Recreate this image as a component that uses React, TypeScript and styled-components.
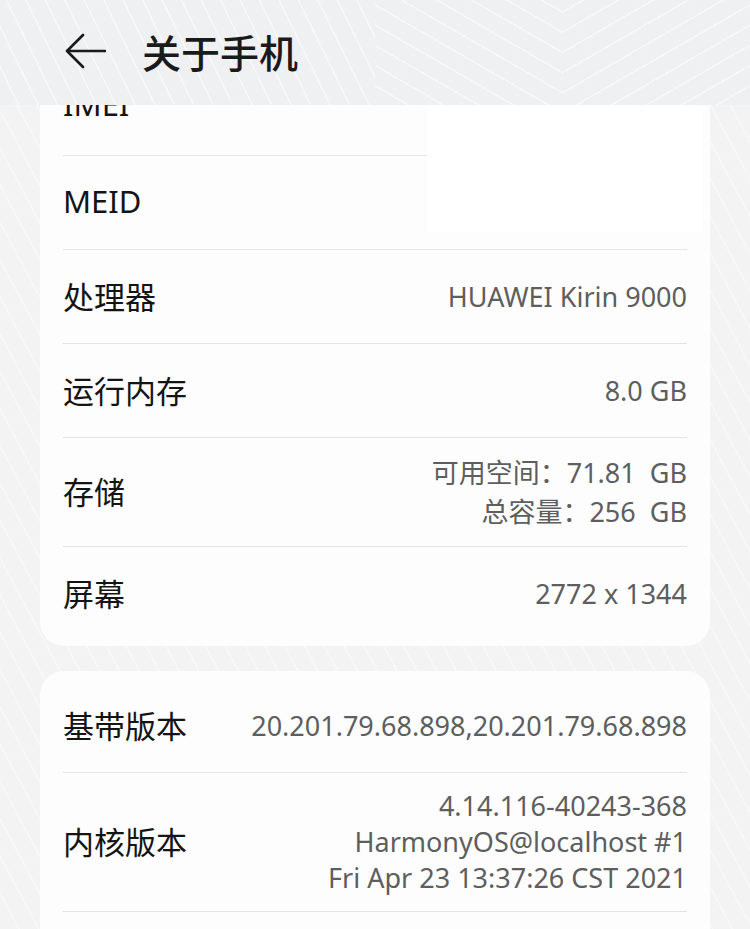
import React from "react";
import styled, { createGlobalStyle } from "styled-components";

const GlobalStyle = createGlobalStyle`
  html, body {
    margin: 0;
    padding: 0;
    background: #f3f3f4;
  }
  body {
    font-family: "Noto Sans", "Noto Sans CJK SC", sans-serif;
    -webkit-font-smoothing: antialiased;
  }
`;

const stripes = (angle: number, color: string) =>
  `repeating-linear-gradient(${angle}deg, transparent 0px, transparent 16px, ${color} 16px, ${color} 17.5px)`;

const Page = styled.div`
  width: 750px;
  height: 929px;
  overflow: hidden;
  display: flex;
  flex-direction: column;
  background-color: #f3f3f4;
  background-image: ${stripes(62, "rgba(255,255,255,0.45)")};
`;

const Header = styled.header`
  height: 105px;
  flex-shrink: 0;
  display: flex;
  align-items: center;
  gap: 34px;
  padding: 0 0 4px 64px;
  box-sizing: border-box;
  background-color: #eff0f2;
  background-image: ${stripes(-30, "rgba(255,255,255,0.5)")},
    ${stripes(30, "rgba(255,255,255,0.5)")},
    ${stripes(64, "rgba(255,255,255,0.5)")};
  background-size: 188px 100%, 187px 100%, 375px 100%;
  background-position: right top, 375px top, left top;
  background-repeat: no-repeat;
  position: relative;
  z-index: 2;
`;

const BackButton = styled.button`
  width: 44px;
  height: 40px;
  padding: 0;
  border: none;
  background: none;
  display: flex;
  align-items: center;
  justify-content: flex-start;
  color: #1a1a1a;
`;

const Title = styled.h1`
  margin: 0;
  font-family: "Noto Sans CJK SC", sans-serif;
  font-size: 39px;
  font-weight: 500;
  color: #1a1a1a;
`;

const Content = styled.main`
  flex: 1;
  position: relative;
  overflow: hidden;
  padding: 0 40px;
  display: flex;
  flex-direction: column;
  gap: 25px;
`;

const Card = styled.section<{ $top?: number; $pt?: number; $pb?: number }>`
  margin-top: ${(p) => p.$top ?? 0}px;
  background: rgba(253, 253, 253, 0.93);
  border-radius: 24px;
  padding: ${(p) => p.$pt ?? 0}px 23px ${(p) => p.$pb ?? 5}px;
  flex-shrink: 0;
`;

const Row = styled.div<{ $h?: number; $last?: boolean }>`
  display: flex;
  justify-content: space-between;
  align-items: center;
  min-height: ${(p) => p.$h ?? 94}px;
  box-sizing: border-box;
  padding: 15px 0;
  border-bottom: ${(p) => (p.$last ? "none" : "1px solid #e4e4e4")};
`;

const Label = styled.div`
  font-family: "Noto Sans", "Noto Sans CJK SC", sans-serif;
  font-size: 31px;
  color: #141414;
  white-space: nowrap;
  margin-top: -3px;
`;

const Value = styled.div<{ $lh?: number }>`
  font-family: "Noto Sans", "Noto Sans CJK SC", sans-serif;
  font-size: 27px;
  line-height: ${(p) => p.$lh ?? 36}px;
  color: #5e5e5e;
  text-align: right;
  white-space: pre;
`;

const Redaction = styled.div`
  position: absolute;
  left: 427px;
  top: 1px;
  width: 276px;
  height: 126px;
  background: #ffffff;
`;

const BackIcon = () => (
  <svg width="42" height="36" viewBox="0 0 42 36" fill="none">
    <path
      d="M19 2 L3 18 L19 34 M3 18 H41"
      stroke="currentColor"
      strokeWidth="2.6"
      strokeLinecap="round"
      strokeLinejoin="round"
    />
  </svg>
);

type Item = { label: string; value: string[]; h?: number; lh?: number };

const card1: Item[] = [
  { label: "IMEI", value: [""], h: 100 },
  { label: "MEID", value: [""] },
  { label: "处理器", value: ["HUAWEI Kirin 9000"] },
  { label: "运行内存", value: ["8.0 GB"] },
  { label: "存储", value: ["可用空间：71.81  GB", "总容量：256  GB"], lh: 39 },
  { label: "屏幕", value: ["2772 x 1344"] },
];

const card2: Item[] = [
  { label: "基带版本", value: ["20.201.79.68.898,20.201.79.68.898"] },
  {
    label: "内核版本",
    value: ["4.14.116-40243-368", "HarmonyOS@localhost #1", "Fri Apr 23 13:37:26 CST 2021"],
  },
];

const renderRows = (items: Item[], lastNoBorder: boolean) =>
  items.map((it, i) => (
    <Row key={it.label} $h={it.h} $last={lastNoBorder && i === items.length - 1}>
      <Label>{it.label}</Label>
      <Value $lh={it.lh}>
        {it.value.map((v, j) => (
          <div key={j}>{v}</div>
        ))}
      </Value>
    </Row>
  ));

export default function App() {
  return (
    <>
      <GlobalStyle />
      <Page>
        <Header>
          <BackButton aria-label="返回">
            <BackIcon />
          </BackButton>
          <Title>关于手机</Title>
        </Header>
        <Content>
          <Card $top={-49}>{renderRows(card1, true)}</Card>
          <Card $pt={8} $pb={60}>
            {renderRows(card2, false)}
          </Card>
          <Redaction />
        </Content>
      </Page>
    </>
  );
}
